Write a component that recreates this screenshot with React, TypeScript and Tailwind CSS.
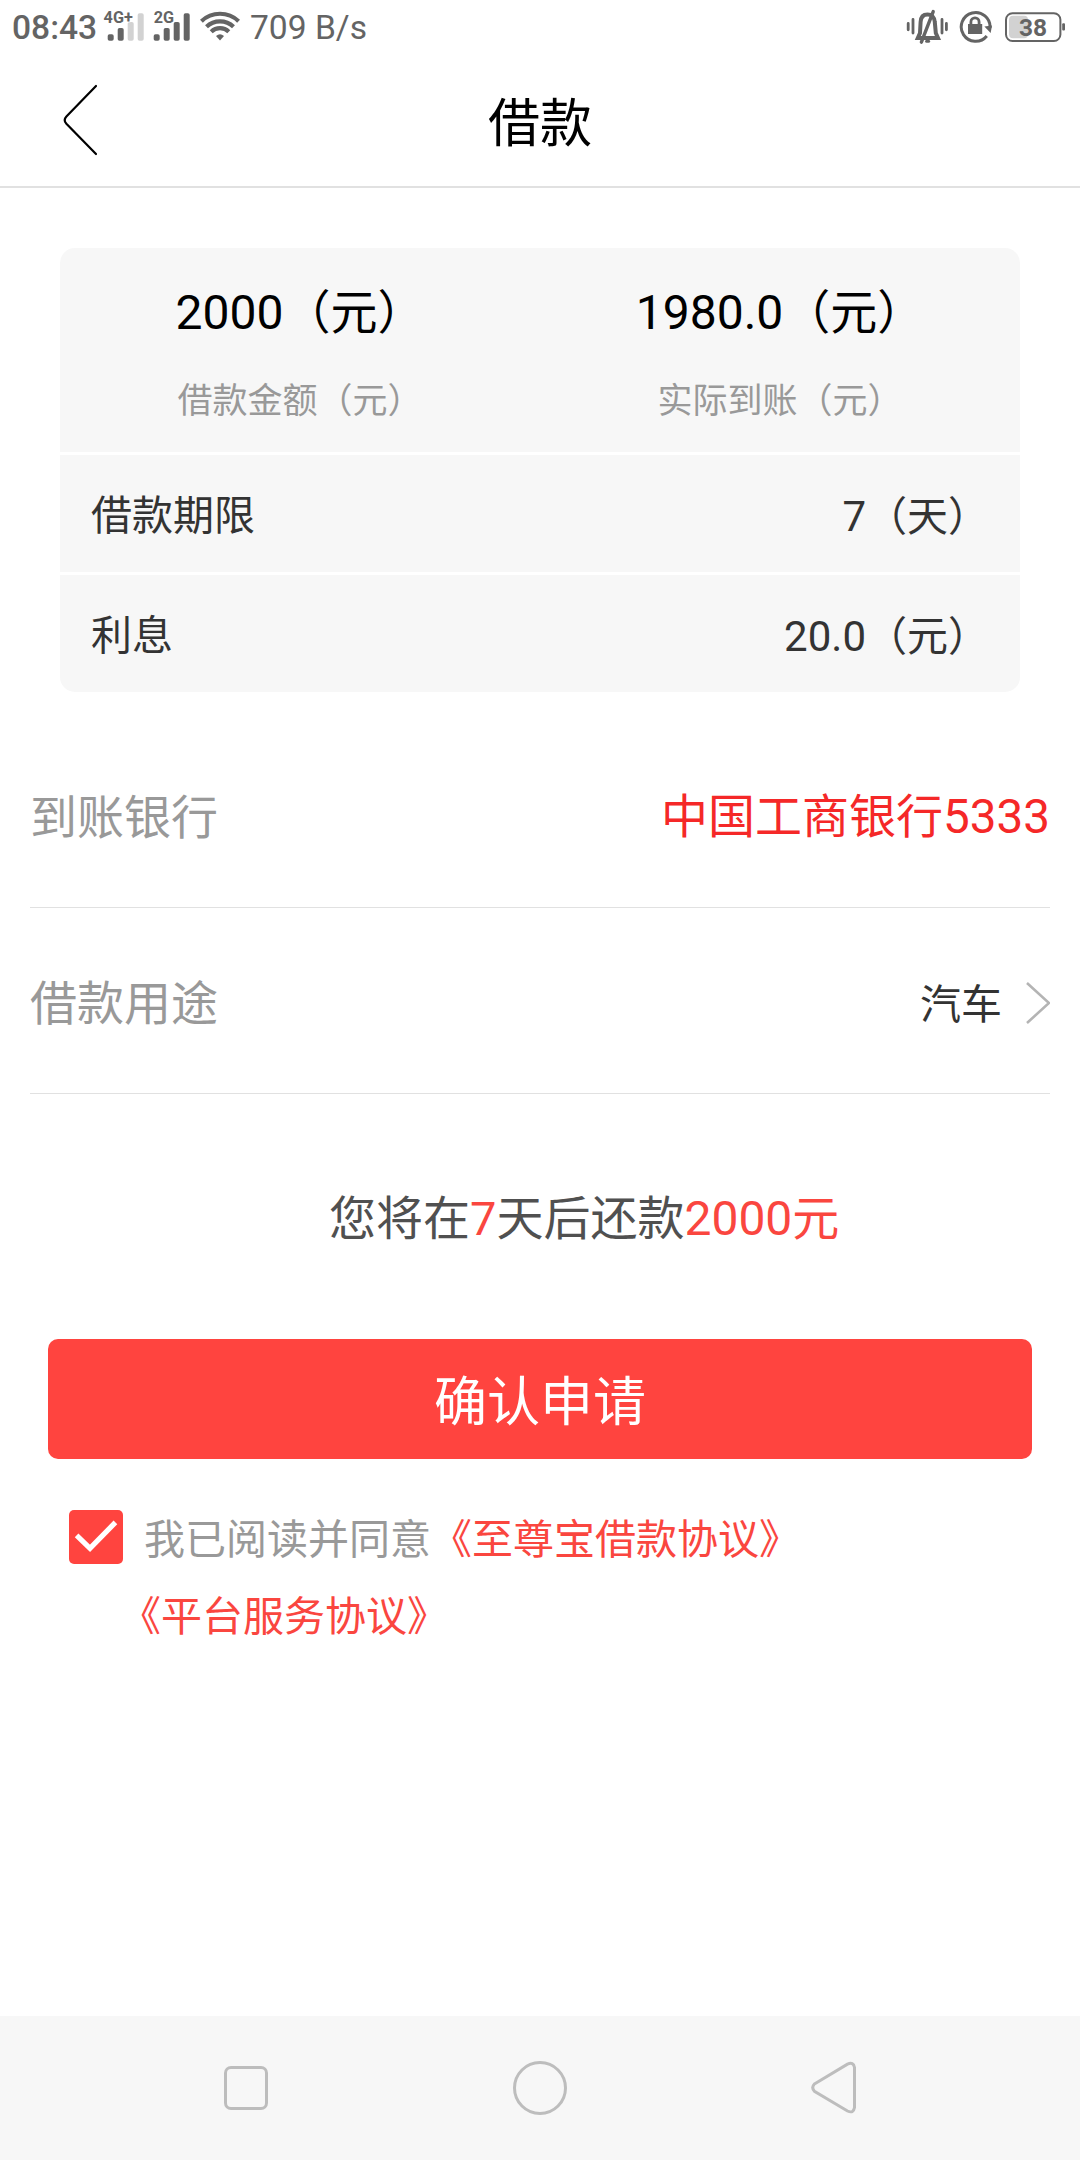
import type { ReactNode } from 'react';

function SignalIcon({ label, labelX, active }: { label: string; labelX: number; active: number }) {
  const bars = [
    { x: 4.7, y: 34.3 },
    { x: 14.7, y: 28 },
    { x: 24.7, y: 22 },
    { x: 34.7, y: 13.2 },
  ];
  return (
    <svg width="41" height="56" viewBox="0 0 41 56">
      {bars.map((bar, i) => (
        <rect
          key={bar.x}
          x={bar.x}
          y={bar.y}
          width="6"
          height={40.7 - bar.y}
          rx="1.8"
          fill={i < active ? '#646464' : '#d2d2d2'}
        />
      ))}
      <text
        x={labelX}
        y="23"
        fontSize="16.2"
        fontWeight="700"
        fill="#646464"
        stroke="#fff"
        strokeWidth="1.6"
        paintOrder="stroke"
      >
        {label}
      </text>
    </svg>
  );
}

function WifiIcon() {
  return (
    <svg width="40" height="56" viewBox="0 0 40 56" fill="none" stroke="#646464" strokeWidth="4.2">
      <path d="M1.4 21.2 A27 27 0 0 1 38.6 21.2" />
      <path d="M6.5 26.8 A19.6 19.6 0 0 1 33.5 26.8" />
      <path d="M11.2 31.8 A12.6 12.6 0 0 1 28.8 31.8" />
      <path d="M16 36 Q20 32.6 24 36 L20 40.4 Z" fill="#646464" stroke="none" />
    </svg>
  );
}

function MuteBellIcon() {
  return (
    <svg width="42" height="56" viewBox="0 0 42 56" fill="none" stroke="#646464">
      <g strokeWidth="2.8" strokeLinecap="round">
        <path d="M2.2 23.4V29.8M7 19.4V33M36 19.4V33M40.4 23.4V29.8" />
      </g>
      <path
        d="M11.8 38 L14 33 L14.6 22 C14.8 17 17.5 14.4 21.5 14.4 C25.5 14.4 28.6 17 28.8 22 L29.8 33 L32 38 Z"
        strokeWidth="4"
      />
      <path d="M15.4 42.2 L27.2 11.6" strokeWidth="3.4" strokeLinecap="round" />
      <path d="M20.6 41.2 H22.6" strokeWidth="3" strokeLinecap="round" />
    </svg>
  );
}

function RotationLockIcon() {
  return (
    <svg width="34" height="56" viewBox="0 0 34 56" fill="none" stroke="#646464">
      <path d="M31 28 A14.4 14.4 0 1 0 27.8 36" strokeWidth="3" />
      <path d="M25.4 26.4 L33 25.4 L31.6 33 Z" fill="#646464" stroke="none" />
      <path d="M11.9 25 V22 A4.1 4.1 0 0 1 20.1 22 V25" strokeWidth="2.8" />
      <rect x="9" y="24" width="14.2" height="10" fill="#646464" stroke="none" />
    </svg>
  );
}

function BatteryIcon() {
  return (
    <svg width="62" height="56" viewBox="0 0 62 56">
      <rect x="1" y="13.2" width="54.4" height="27.8" rx="6.5" fill="none" stroke="#646464" strokeWidth="2" />
      <rect x="4" y="15.8" width="19" height="22.4" rx="4" fill="#d2d2d2" />
      <rect x="57.2" y="23.2" width="2.8" height="7.4" rx="1" fill="#646464" />
      <text x="28" y="36" fontSize="24.5" fontWeight="700" textAnchor="middle" fill="#646464">
        38
      </text>
    </svg>
  );
}

function StatusBar() {
  return (
    <div className="flex h-14 justify-between text-[#646464]">
      <div className="flex">
        <span className="ml-[12px] w-[91px] text-[33.6px] leading-[56px] font-medium">08:43</span>
        <SignalIcon label="4G+" labelX={0.6} active={2} />
        <div className="ml-[5px] flex">
          <SignalIcon label="2G" labelX={4.8} active={4} />
        </div>
        <div className="ml-[10px] flex">
          <WifiIcon />
        </div>
        <span className="ml-[10px] text-[33.6px] leading-[55px]">709 B/s</span>
      </div>
      <div className="flex pr-[13px]">
        <MuteBellIcon />
        <div className="mr-[12px] ml-[11px] flex">
          <RotationLockIcon />
        </div>
        <BatteryIcon />
      </div>
    </div>
  );
}

function Header() {
  return (
    <header className="grid h-[132px] grid-cols-3 items-center border-b-2 border-[#e1e1e1]">
      <button className="pb-[2px] pl-[60px]">
        <svg width="40" height="76" viewBox="0 0 40 76" fill="none" stroke="#000" strokeWidth="2.2" strokeLinecap="round">
          <path d="M36 4 L6.4 34.4 Q3 38 6.4 41.8 L36 72" />
        </svg>
      </button>
      <h1 className="pt-[8px] text-center text-[52px] leading-[60px] text-black">借款</h1>
    </header>
  );
}

function Amount({ value, label }: { value: string; label: string }) {
  return (
    <div className="flex flex-1 flex-col items-center pt-[31px]">
      <div className="text-[48px] leading-[68px] text-black">
        {value}
        <span className="text-[47px]">（元）</span>
      </div>
      <div className="mt-[29px] text-[35px] leading-[52px] text-[#999]">{label}</div>
    </div>
  );
}

function CardRow({ label, value, unit }: { label: string; value: string; unit: string }) {
  return (
    <div className="flex h-[117px] items-center justify-between bg-[#f7f7f7] pt-[6px] pr-[31px] pl-[31px] text-[41px] text-[#333]">
      <span>{label}</span>
      <span>
        <span className="text-[42px]">{value}</span>
        {unit}
      </span>
    </div>
  );
}

function FieldRow({ label, children }: { label: string; children: ReactNode }) {
  return (
    <div className="mx-[30px] flex h-[186px] items-center justify-between border-b border-[#e1e1e1] pt-[7px]">
      <span className="text-[47px] text-[#999]">{label}</span>
      {children}
    </div>
  );
}

function NavBar() {
  return (
    <nav className="flex h-36 items-center bg-[#f7f7f7] pl-[224px]">
      <div className="h-11 w-11 rounded-[7px] border-3 border-[#bdbdbd]" />
      <div className="ml-[245px] h-[54px] w-[54px] rounded-full border-3 border-[#bdbdbd]" />
      <svg className="ml-[243px]" width="48" height="56" viewBox="0 0 48 56" fill="none" stroke="#bdbdbd" strokeWidth="3">
        <path d="M4.4 24 L37.5 4.2 Q43.5 1.4 44.5 7.6 V47.6 Q43.5 53.8 37.5 51 L4.4 31.2 Q1 27.6 4.4 24 Z" />
      </svg>
    </nav>
  );
}

export default function App() {
  return (
    <div className="flex h-[2160px] w-[1080px] flex-col bg-white font-[Roboto,'Noto_Sans_CJK_SC',sans-serif]">
      <StatusBar />
      <Header />

      <main className="flex-1">
        <section className="mx-[60px] mt-[60px] flex flex-col gap-[3px] overflow-hidden rounded-[15px]">
          <div className="flex h-[204px] bg-[#f7f7f7]">
            <Amount value="2000" label="借款金额（元）" />
            <Amount value="1980.0" label="实际到账（元）" />
          </div>
          <CardRow label="借款期限" value="7" unit="（天）" />
          <CardRow label="利息" value="20.0" unit="（元）" />
        </section>

        <section className="mt-[30px]">
          <FieldRow label="到账银行">
            <span className="text-[47px] text-[#f52828]">
              中国工商银行<span className="text-[47.6px]">5333</span>
            </span>
          </FieldRow>
          <FieldRow label="借款用途">
            <div className="flex items-center">
              <span className="pt-[4px] text-[41px] text-[#333]">汽车</span>
              <svg className="ml-[22px]" width="26" height="44" viewBox="0 0 26 44" fill="none" stroke="#b4b4b4" strokeWidth="2.6">
                <path d="M3 1 L25 21 L3 41" />
              </svg>
            </div>
          </FieldRow>
        </section>

        <p className="mt-[90px] pl-[329px] text-[47px] leading-[70px] text-[#505050]">
          您将在<span className="text-[#fa463f]">7</span>天后还款
          <span className="text-[#fa463f]">
            <span className="text-[48px]">2000</span>元
          </span>
        </p>

        <button className="mx-[48px] mt-[85px] block h-[120px] w-[984px] rounded-[10px] bg-[#ff443f] pt-[9px] text-[53px] text-white">
          确认申请
        </button>

        <div className="mt-[39px] ml-[69px] text-[41px] leading-[77px]">
          <div className="flex h-[78px] items-center">
            <span className="flex h-[54px] w-[54px] items-center justify-center rounded-[5px] bg-[#ff443f]">
              <svg width="54" height="54" viewBox="0 0 54 54" fill="none" stroke="#fff" strokeWidth="5.2">
                <path d="M7.6 25.4 L21 38.4 L46.4 12.4" />
              </svg>
            </span>
            <span className="ml-[21px] pt-[6px] text-[#999]">我已阅读并同意</span>
            <a className="pt-[6px] text-[#fa463f]">《至尊宝借款协议》</a>
          </div>
          <a className="ml-[51px] block pt-[3px] text-[#fa463f]">《平台服务协议》</a>
        </div>
      </main>

      <NavBar />
    </div>
  );
}
